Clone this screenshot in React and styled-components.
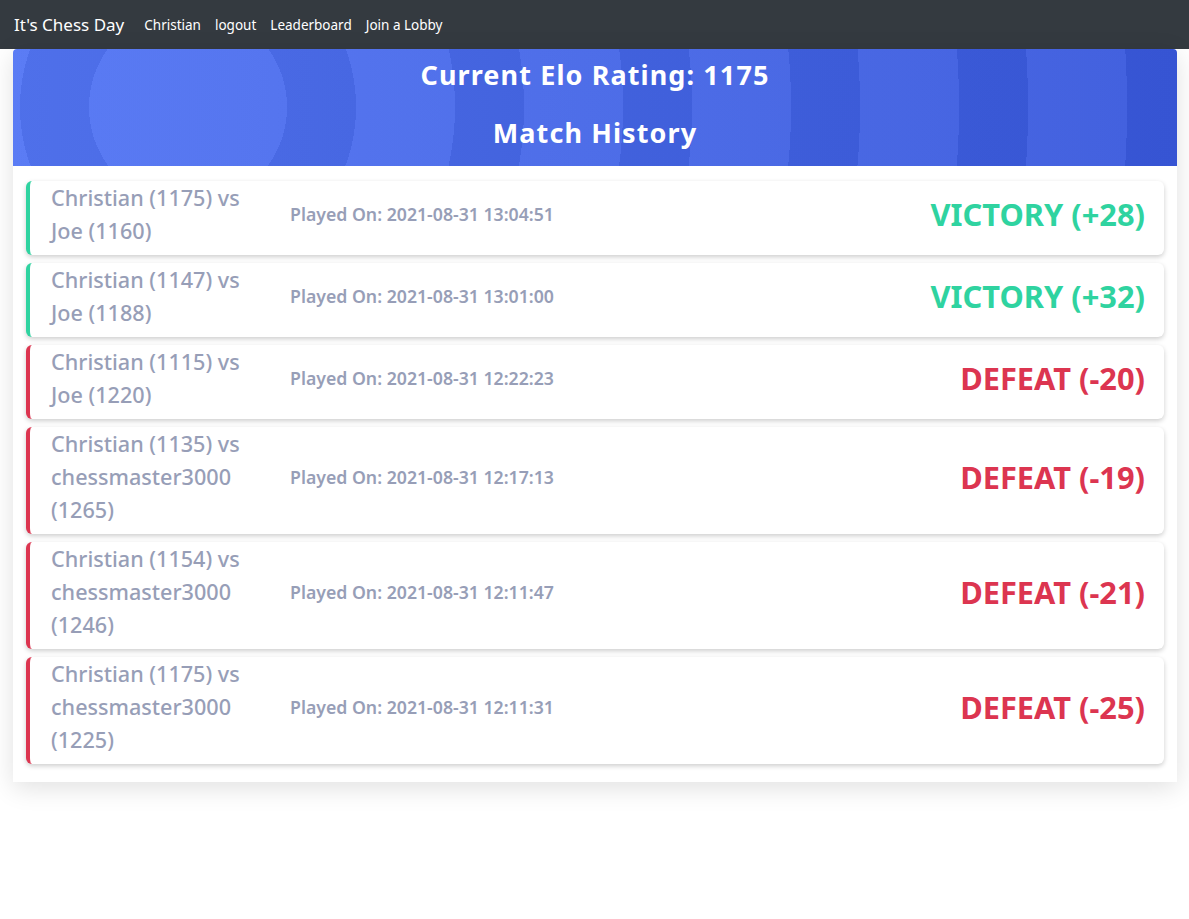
import styled, { createGlobalStyle } from "styled-components"

const matches = [
    { player: "Christian", playerElo: 1175, opponent: "Joe", opponentElo: 1160, date: "2021-08-31 13:04:51", won: true, change: 28 },
    { player: "Christian", playerElo: 1147, opponent: "Joe", opponentElo: 1188, date: "2021-08-31 13:01:00", won: true, change: 32 },
    { player: "Christian", playerElo: 1115, opponent: "Joe", opponentElo: 1220, date: "2021-08-31 12:22:23", won: false, change: -20 },
    { player: "Christian", playerElo: 1135, opponent: "chessmaster3000", opponentElo: 1265, date: "2021-08-31 12:17:13", won: false, change: -19 },
    { player: "Christian", playerElo: 1154, opponent: "chessmaster3000", opponentElo: 1246, date: "2021-08-31 12:11:47", won: false, change: -21 },
    { player: "Christian", playerElo: 1175, opponent: "chessmaster3000", opponentElo: 1225, date: "2021-08-31 12:11:31", won: false, change: -25 },
]

const App = () => {
    return (
        <>
            <GlobalStyle />
            <NavBar>
                <Brand>It's Chess Day</Brand>
                <NavLinks>
                    <NavLink>Christian</NavLink>
                    <NavLink>logout</NavLink>
                    <NavLink>Leaderboard</NavLink>
                    <NavLink>Join a Lobby</NavLink>
                </NavLinks>
            </NavBar>
            <Page>
                <Card>
                    <Header>
                        <Title>Current Elo Rating: 1175</Title>
                        <Title>Match History</Title>
                    </Header>
                    <List>
                        {matches.map((m, i) => (
                            <Row key={i} $won={m.won}>
                                <Players>
                                    {m.player} ({m.playerElo}) vs {m.opponent} ({m.opponentElo})
                                </Players>
                                <Played>Played On: {m.date}</Played>
                                <Result $won={m.won}>
                                    {m.won ? "VICTORY" : "DEFEAT"} ({m.change > 0 ? "+" + m.change : m.change})
                                </Result>
                            </Row>
                        ))}
                    </List>
                </Card>
            </Page>
        </>
    )
}

export default App

const GlobalStyle = createGlobalStyle`
    body {
        margin: 0;
        background: #fff;
        font-family: "Noto Sans", "Open Sans", sans-serif;
    }
`
const NavBar = styled.nav`
    height: 49px;
    background: #343a40;
    display: flex;
    align-items: center;
    padding: 0 14px;
`
const Brand = styled.div`
    color: #fff;
    font-size: 17px;
    margin-right: 20px;
`
const NavLinks = styled.div`
    display: flex;
    gap: 14px;
`
const NavLink = styled.a`
    color: #fff;
    font-size: 13.5px;
    cursor: pointer;
`
const Page = styled.main`
    padding: 0 12px 40px 13px;
`
const Card = styled.section`
    background: #fff;
    box-shadow: 0 6px 24px rgba(0, 0, 0, 0.12);
    padding-bottom: 18px;
`
const Header = styled.header`
    height: 117px;
    box-sizing: border-box;
    padding-top: 10px;
    border-radius: 4px 4px 0 0;
    display: flex;
    flex-direction: column;
    align-items: center;
    gap: 26px;
    background:
        repeating-radial-gradient(circle at 175px 58px,
            rgba(255, 255, 255, 0.05) 0 99px,
            rgba(0, 0, 0, 0.045) 99px 168px),
        linear-gradient(90deg, #5275f4 0%, #4667e8 45%, #3858dc 100%);
`
const Title = styled.h1`
    margin: 0;
    color: #fff;
    font-size: 27px;
    font-weight: 700;
    letter-spacing: 1.1px;
    line-height: 32px;
`
const List = styled.div`
    display: flex;
    flex-direction: column;
    gap: 8px;
    padding: 15px 13px 0;
`
const Row = styled.div`
    display: flex;
    align-items: center;
    gap: 25px;
    padding: 0 19px 8px 21px;
    border-left: 4px solid ${p => p.$won ? "#2fd3a0" : "#dc3550"};
    border-radius: 6px;
    background: #fff;
    box-shadow: 0 2px 5px rgba(0, 0, 0, 0.2);
`
const Players = styled.div`
    width: 214px;
    flex-shrink: 0;
    font-size: 21.6px;
    line-height: 33px;
    font-weight: 500;
    color: #979eb7;
`
const Played = styled.div`
    flex: 1;
    font-size: 17.7px;
    font-weight: 600;
    color: #979eb7;
`
const Result = styled.div`
    font-size: 30.8px;
    font-weight: 700;
    color: ${p => p.$won ? "#2fd3a0" : "#dc3550"};
`
